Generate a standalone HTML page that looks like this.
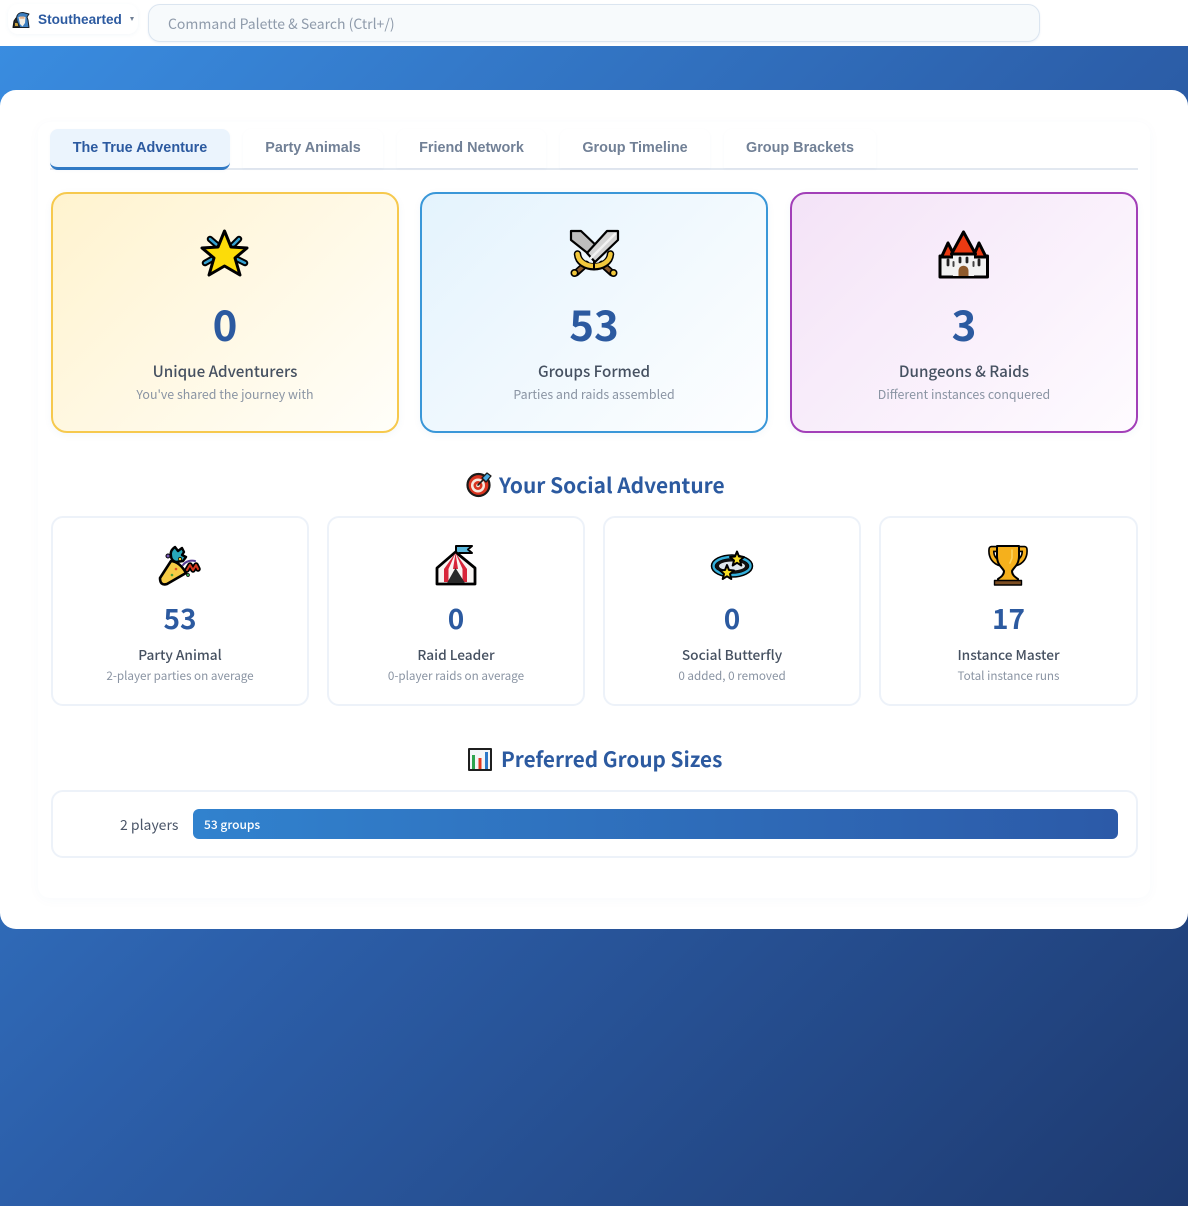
<!DOCTYPE html>
<html lang="en"><head><meta charset="utf-8"><title>Stouthearted</title>
<style>
*{box-sizing:border-box}
html,body{margin:0;padding:0;width:1188px;height:1206px;overflow:hidden}
body{position:relative;background:linear-gradient(135deg,#3a8ee2 0%,#2c5faa 50%,#1e3a70 100%);font-family:"Noto Sans CJK JP","Liberation Sans",sans-serif}
.a{position:absolute}
#top{left:0;top:0;width:1188px;height:46px;background:#fff}
#who{left:8px;top:4px;width:130px;height:30px;background:#fff;border-radius:10px;box-shadow:0 1px 4px rgba(44,90,160,.05)}
#name{left:38px;top:10px;font:bold 13.6px/20px "Liberation Sans",sans-serif;color:#2c5aa0}
#caret{left:129.500px;top:17px;width:0;height:0;border-left:2.500px solid transparent;border-right:2.500px solid transparent;border-top:4px solid #718096}
#search{left:148px;top:4px;width:892px;height:38px;background:#f7fafc;border:1.500px solid #dbe5f0;border-radius:12px;box-shadow:0 1px 2px rgba(44,90,160,.08)}
#ph{left:168px;top:13px;font-size:14px;line-height:22px;color:#8f9bab}
#main{left:0;top:90px;width:1188px;height:839px;background:#fff;border-radius:16px}
#panel{left:38px;top:122px;width:1112px;height:776px;background:#fff;border-radius:12px;box-shadow:0 2px 12px rgba(44,90,160,.03)}
#line{left:50px;top:168px;width:1088px;height:2px;background:#e2e8f0}
.tab{top:129px;height:39px;background:#fff;border-radius:8px 8px 0 0;font:bold 14.4px/38px "Liberation Sans",sans-serif;color:#718096;text-align:center;box-shadow:0 1px 3px rgba(44,90,160,.035)}
#t1{left:50px;width:180px;height:41px;background:#ebf4fd;color:#2c5aa0;border-bottom:3px solid #3079c4;border-radius:8px}
.big{top:192px;width:348px;height:241px;border:2px solid;border-radius:16px;box-shadow:0 2px 8px rgba(44,90,160,.05)}
.c{position:absolute;text-align:center;white-space:nowrap}
.n1{top:296px;height:56px;font-size:42px;line-height:56px;font-weight:700;color:#2c5aa0}
.l1{top:359px;height:24px;font-size:15.200px;line-height:24px;font-weight:500;color:#465161}
.s1{top:385px;height:18px;font-size:12.400px;line-height:18px;color:#8a94a3}
.sm{top:516px;width:258px;height:190px;background:#fff;border:2px solid #edf2f9;border-radius:12px}
.n2{top:599px;height:38px;font-size:28px;line-height:38px;font-weight:700;color:#2c5aa0}
.l2{top:643.500px;height:20px;font-size:13.700px;line-height:20px;font-weight:500;color:#465161}
.s2{top:667px;height:18px;font-size:11.700px;line-height:18px;color:#8a94a3}
.h{font-size:21px;line-height:30px;height:30px;font-weight:700;color:#2c5aa0;white-space:nowrap}
#barbox{left:51px;top:790px;width:1087px;height:68px;background:#fff;border:2px solid #edf2f9;border-radius:12px}
#bar{left:193px;top:809px;width:925px;height:30px;border-radius:6px;background:linear-gradient(90deg,#3182ce,#2c5aa8)}
#pl{left:120px;top:815px;font-size:14px;line-height:20px;color:#4a5568}
#gl{left:204px;top:816px;font-size:12px;line-height:18px;font-weight:500;color:#fff}
#ic{left:0;top:0;width:1188px;height:1206px}
</style></head><body>
<div class="a" id="top"></div>
<div class="a" id="who"></div>
<div class="a" id="name">Stouthearted</div>
<div class="a" id="caret"></div>
<div class="a" id="search"></div>
<div class="a" id="ph">Command Palette &amp; Search (Ctrl+/)</div>
<div class="a" id="main"></div>
<div class="a" id="panel"></div>
<div class="a" id="line"></div>
<div class="a tab" id="t1">The True Adventure</div>
<div class="a tab" style="left:243px;width:140px">Party Animals</div>
<div class="a tab" style="left:397px;width:149px">Friend Network</div>
<div class="a tab" style="left:560px;width:150px">Group Timeline</div>
<div class="a tab" style="left:724px;width:152px">Group Brackets</div>

<div class="a big" style="left:51px;border-color:#f6c94e;background:linear-gradient(135deg,#fff3cf,#fffef9)"></div>
<div class="a big" style="left:420px;border-color:#3a97d8;background:linear-gradient(135deg,#e4f3fd,#fdfeff)"></div>
<div class="a big" style="left:790px;border-color:#a23fb8;background:linear-gradient(135deg,#f4e3f7,#fefbff)"></div>

<div class="c n1" style="left:51px;width:348px">0</div>
<div class="c l1" style="left:51px;width:348px">Unique Adventurers</div>
<div class="c s1" style="left:51px;width:348px">You've shared the journey with</div>
<div class="c n1" style="left:420px;width:348px">53</div>
<div class="c l1" style="left:420px;width:348px">Groups Formed</div>
<div class="c s1" style="left:420px;width:348px">Parties and raids assembled</div>
<div class="c n1" style="left:790px;width:348px">3</div>
<div class="c l1" style="left:790px;width:348px">Dungeons &amp; Raids</div>
<div class="c s1" style="left:790px;width:348px">Different instances conquered</div>

<div class="a h" style="left:499px;top:470px;font-size:20.900px">Your Social Adventure</div>

<div class="a sm" style="left:51px"></div>
<div class="a sm" style="left:327px"></div>
<div class="a sm" style="left:603px"></div>
<div class="a sm" style="left:879px;width:259px"></div>
<div class="c n2" style="left:51px;width:258px">53</div>
<div class="c l2" style="left:51px;width:258px">Party Animal</div>
<div class="c s2" style="left:51px;width:258px">2-player parties on average</div>
<div class="c n2" style="left:327px;width:258px">0</div>
<div class="c l2" style="left:327px;width:258px">Raid Leader</div>
<div class="c s2" style="left:327px;width:258px">0-player raids on average</div>
<div class="c n2" style="left:603px;width:258px">0</div>
<div class="c l2" style="left:603px;width:258px">Social Butterfly</div>
<div class="c s2" style="left:603px;width:258px">0 added, 0 removed</div>
<div class="c n2" style="left:879px;width:259px">17</div>
<div class="c l2" style="left:879px;width:259px">Instance Master</div>
<div class="c s2" style="left:879px;width:259px">Total instance runs</div>

<div class="a h" style="left:501px;top:742.500px;font-size:20.700px">Preferred Group Sizes</div>
<div class="a" id="barbox"></div>
<div class="a" id="pl">2 players</div>
<div class="a" id="bar"></div>
<div class="a" id="gl">53 groups</div>

<svg class="a" id="ic" viewBox="0 0 1188 1206" fill="none" stroke-linejoin="round" stroke-linecap="round">
<!-- wizard -->
<path d="M13 27.500L14 21L16 18H20V27.500Z" fill="#2a2a28" stroke="#111" stroke-width="1"/>
<path d="M15 23H18V26H15Z" fill="#c9a13c"/>
<path d="M16.500 18C17 14 19 12.500 23 12.500L29 14L27 17L28 20L29 27.500H20L17 21Z" fill="#3d7fc0" stroke="#17212c" stroke-width="1"/>
<path d="M18.500 17H25.500L25 23L22.500 26.500L20 24Z" fill="#f3efe6"/>
<path d="M19.500 16.500H24.500V18.800H19.500Z" fill="#e6b48e"/>
<!-- star -->
<g>
<path d="M210 239L217 245M239 239L232 246M205 263L212 259M245 263L237 259" stroke="#000" stroke-width="6.500"/>
<path d="M210 239L217 245M239 239L232 246M205 263L212 259M245 263L237 259" stroke="#35a2d2" stroke-width="2.500"/>
<path d="M224.500 231L231 247L247 248L235 258L240 275L224.500 266L209 275L214 258L202 248L218 247Z" fill="#fcdc09" stroke="#000" stroke-width="3"/>
</g>
<!-- swords -->
<g>
<path d="M586 264L576 273M602 264L612 273" stroke="#000" stroke-width="7"/>
<path d="M586 264L578 271M602 264L610 271" stroke="#8a5a2b" stroke-width="3.500"/>
<circle cx="574.500" cy="273" r="3.200" fill="#f2c83c" stroke="#000" stroke-width="1.600"/>
<circle cx="613.500" cy="273" r="3.200" fill="#f2c83c" stroke="#000" stroke-width="1.600"/>
<path d="M577.500 254C579 271 609 271 610.500 254" stroke="#000" stroke-width="7.500"/>
<path d="M577.500 254C579 270 609 270 610.500 254" stroke="#f2c83c" stroke-width="4.500"/>
<path d="M571 231H581L602 251L595 259L571 240Z" fill="#bdbdbd" stroke="#000" stroke-width="2.200"/>
<path d="M618 231H607L587 253L595 262L618 240Z" fill="#d4d4d4" stroke="#000" stroke-width="2.200"/>
<path d="M615 234L591 258" stroke="#f2f2f2" stroke-width="2.500"/>
<path d="M594 262V268" stroke="#000" stroke-width="2"/>
</g>
<!-- castle -->
<g>
<rect x="940" y="256" width="47.500" height="21" fill="#f2f2f2" stroke="#000" stroke-width="3"/>
<path d="M948 243L941.500 257H955Z" fill="#ea3a12" stroke="#000" stroke-width="3"/>
<path d="M979 243L973 257H986Z" fill="#ea3a12" stroke="#000" stroke-width="3"/>
<rect x="953" y="252" width="21" height="24" fill="#f2f2f2"/>
<path d="M963.500 232L951.500 254H975.500Z" fill="#ea3a12" stroke="#000" stroke-width="3"/>
<path d="M958.500 276V271C958.500 264 968.500 264 968.500 271V276Z" fill="#8e5a2c"/>
<path d="M948 260V265M979 260V265M960 258V262M967 258V262" stroke="#222" stroke-width="2.800"/>
<path d="M953.500 262V266M973.500 262V266" stroke="#444" stroke-width="2"/>
</g>
<!-- popper -->
<g>
<path d="M171 556C170 552 172 549 175 547L178 551L182 548L184 552L182 555L186 557L183 561L176 562C173 561 171 559 171 556Z" fill="#28a7b8" stroke="#000" stroke-width="2.400"/>
<path d="M187 570L190 565L193 570L196 565L198 569" stroke="#000" stroke-width="5.500"/>
<path d="M187 570L190 565L193 570L196 565L198 569" stroke="#d8391f" stroke-width="2"/>
<path d="M183 565C186 561 191 560 195 561" stroke="#5a3f96" stroke-width="2"/>
<path d="M160 578L171 561Q180 562 186 573L167 584Q160 586 160 578Z" fill="#f6cb45" stroke="#000" stroke-width="2.600"/>
<circle cx="168" cy="556" r="2" fill="#7a5bb8" stroke="#000"/>
<circle cx="180" cy="559" r="1.600" fill="#f2d53c" stroke="#000" stroke-width=".7"/>
<circle cx="188" cy="575" r="1.500" fill="#2da44e" stroke="#000" stroke-width=".7"/>
<circle cx="176" cy="569" r="1.300" fill="#e0552b"/><circle cx="172" cy="575" r="1.300" fill="#4aa03c"/>
</g>
<!-- tent -->
<g>
<path d="M456 551V546H472L468 549.500L472 553H459" fill="#5bb8dc" stroke="#000" stroke-width="2"/>
<path d="M455.500 552L475 568V584H437V568Z" fill="#f9f5f3" stroke="#000" stroke-width="2.800"/>
<path d="M455.500 553L444 569V582H448.500V569Z" fill="#d8263a"/>
<path d="M455.500 553L467 569V582H462.500V569Z" fill="#d8263a"/>
<path d="M455.500 553L453 569H458Z" fill="#d8263a"/>
<path d="M455.500 568L447 583H465Z" fill="#2a2a2a"/>
</g>
<!-- orbit -->
<g>
<ellipse cx="732" cy="566" rx="19" ry="9.500" fill="#111" stroke="#000" stroke-width="4.500"/>
<ellipse cx="732" cy="566" rx="18.500" ry="9" stroke="#35b0dc" stroke-width="2.400"/>
<ellipse cx="732" cy="566" rx="13" ry="4.500" fill="#dfe7ec"/>
<path d="M737 551.500L739 556.500L744 557L740 560.500L741.300 565.500L737 562.800L732.700 565.500L734 560.500L730 557L735 556.500Z" fill="#f7dd24" stroke="#000" stroke-width="2"/>
<path d="M727 565L729 570L734 570.500L730 574L731.300 579L727 576.300L722.700 579L724 574L720 570.500L725 570Z" fill="#f7dd24" stroke="#000" stroke-width="2"/>
</g>
<!-- trophy -->
<g>
<path d="M998 549H991.500C990.500 557 995 562 1001 563.500M1018 549H1024.500C1025.500 557 1021 562 1015 563.500" stroke="#000" stroke-width="6.500"/>
<path d="M998 549H991.500C990.500 557 995 562 1001 563.500M1018 549H1024.500C1025.500 557 1021 562 1015 563.500" stroke="#f5b01c" stroke-width="3.200"/>
<path d="M997 546H1019V556C1019 565 1014 567 1012 571C1012 575 1015 577 1018 579V581H998V579C1001 577 1004 575 1004 571C1002 567 997 565 997 556Z" fill="#f5b01c" stroke="#000" stroke-width="2"/>
<path d="M1012 550V558L1010 563" stroke="#fbd35c" stroke-width="1.600"/>
<rect x="994.500" y="580.500" width="27" height="4.500" fill="#7d4e22" stroke="#000" stroke-width="1.400"/>
</g>
<!-- target -->
<g>
<circle cx="478.500" cy="485" r="11" fill="#d9341f" stroke="#1a1a1a" stroke-width="2.200"/>
<circle cx="478" cy="485.500" r="7" fill="#f6e9df"/>
<circle cx="478" cy="485.500" r="4.500" fill="#d9341f"/>
<circle cx="478" cy="485.500" r="1.800" fill="#f6e9df"/>
<path d="M478 485L484 479" stroke="#1a1a1a" stroke-width="1.600"/>
<path d="M482 478L487 473L491 476L486 482Z" fill="#49a9e0" stroke="#1a1a1a" stroke-width="1.300"/>
</g>
<!-- chart -->
<g>
<rect x="469" y="749" width="22" height="21" fill="#f3f6f8" stroke="#1f1f1f" stroke-width="2"/>
<path d="M473.500 769V755" stroke="#2da44e" stroke-width="3" stroke-linecap="butt"/>
<path d="M480 769V758" stroke="#e5391f" stroke-width="3" stroke-linecap="butt"/>
<path d="M486.500 769V752" stroke="#2b78c8" stroke-width="3" stroke-linecap="butt"/>
</g>
</svg>
</body></html>
